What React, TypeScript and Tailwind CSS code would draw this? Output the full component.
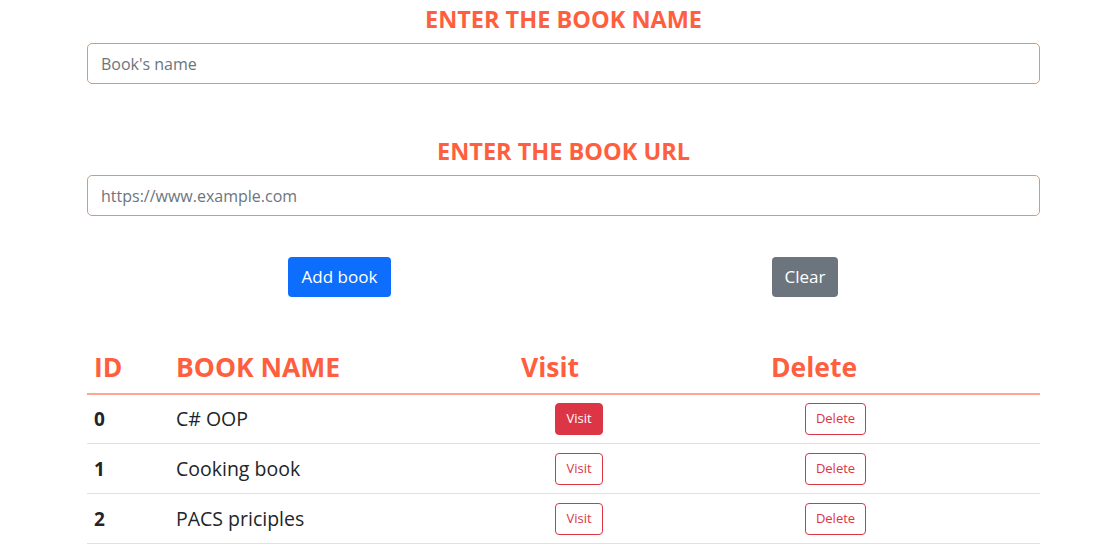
import React from 'react';

const books = [
  { id: 0, name: 'C# OOP', active: true },
  { id: 1, name: 'Cooking book', active: false },
  { id: 2, name: 'PACS priciples', active: false },
];

export default function App() {
  return (
    <div className="w-[1094px] h-[560px] bg-white overflow-hidden text-[#212529]" style={{ fontFamily: '"Open Sans", "Noto Sans", sans-serif' }}>
      <div className="ml-[87px] w-[953px]">
        {/* Book name */}
        <h3 className="pt-[3px] h-[43px] text-center text-[23.5px] leading-[32px] font-bold text-[#ff5f3f]">ENTER THE BOOK NAME</h3>
        <input
          type="text"
          placeholder="Book's name"
          className="block w-full h-[41px] px-[13px] rounded-[5px] border border-[#dc9a68] text-[16px] placeholder:text-[#6c757d] outline-none"
        />

        {/* Book url */}
        <h3 className="mt-[48px] pt-[3px] h-[43px] text-center text-[23.5px] leading-[32px] font-bold text-[#ff5f3f]">ENTER THE BOOK URL</h3>
        <input
          type="text"
          placeholder="https://www.example.com"
          className="block w-full h-[41px] px-[13px] rounded-[5px] border border-[#dc9a68] text-[16px] placeholder:text-[#6c757d] outline-none"
        />

        {/* Buttons */}
        <div className="flex mt-[41px] h-[40px]">
          <button className="ml-[201px] w-[103px] h-[40px] rounded-[4px] bg-[#0d6efd] text-white text-[17px]">Add book</button>
          <button className="ml-[381px] w-[66px] h-[40px] rounded-[4px] bg-[#6c757d] text-white text-[17px]">Clear</button>
        </div>

        {/* Table */}
        <table className="mt-[51px] w-full border-collapse text-left">
          <thead>
            <tr className="border-b-2 border-[#ffa593] h-[44px]">
              <th className="w-[81px] px-[7px] pb-[5px] text-[26.5px] font-bold text-[#ff5f3f] align-bottom">ID</th>
              <th className="w-[345px] px-[8px] pb-[5px] text-[26.5px] font-bold text-[#ff5f3f] align-bottom">BOOK NAME</th>
              <th className="w-[250px] px-[8px] pb-[5px] text-[26.5px] font-bold text-[#ff5f3f] align-bottom">Visit</th>
              <th className="px-[8px] pb-[5px] text-[26.5px] font-bold text-[#ff5f3f] align-bottom">Delete</th>
            </tr>
          </thead>
          <tbody>
            {books.map((b) => (
              <tr key={b.id} className="border-b border-[#dee2e6] h-[50px]">
                <td className="px-[7px] text-[19px] font-bold">{b.id}</td>
                <td className="px-[8px] text-[19.5px]">{b.name}</td>
                <td className="px-[8px]">
                  <button
                    className={`ml-[34px] w-[48px] h-[32px] rounded-[4px] text-[13px] border ${
                      b.active ? 'bg-[#dc3545] border-[#dc3545] text-white' : 'bg-white border-[#dc3545] text-[#dc3545]'
                    }`}
                  >
                    Visit
                  </button>
                </td>
                <td className="px-[8px]">
                  <button className="ml-[34px] w-[61px] h-[32px] rounded-[4px] text-[13px] border border-[#dc3545] text-[#dc3545] bg-white">
                    Delete
                  </button>
                </td>
              </tr>
            ))}
          </tbody>
        </table>
      </div>
    </div>
  );
}
